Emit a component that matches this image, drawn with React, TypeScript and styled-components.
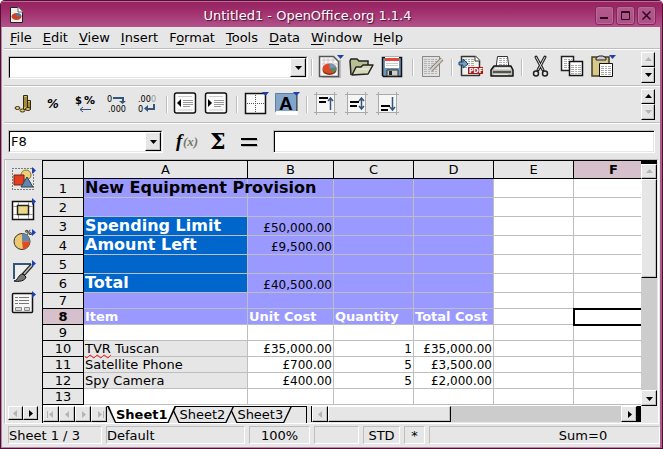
import React from "react";
import styled, { createGlobalStyle, css } from "styled-components";

const face = "#e6e6e6";
const line = "#bebebe";
const purple = "#9999ff";
const blue = "#0066cc";
const pink = "#d6c0cc";

const GlobalStyle = createGlobalStyle`
  * { box-sizing: border-box; }
  body { margin: 0; background: #fff; }
  body, button, input, select, table {
    font-family: "DejaVu Sans", "Bitstream Vera Sans", sans-serif;
    font-size: 13px;
    line-height: 15px;
    color: #000;
  }
  button, input, select { margin: 0; padding: 0; border: 0; border-radius: 0; }
  svg { display: block; flex: none; }
`;

const raised = css`
  background: ${face};
  border: 1px solid;
  border-color: #fff #000 #000 #fff;
  box-shadow: inset -1px -1px 0 ${line};
`;

const Window = styled.div`
  min-height: 100vh;
  display: flex;
  flex-direction: column;
  background: ${face};
  border: solid #4f0f36;
  border-width: 0 1px 1px;
  border-radius: 5px 5px 0 0;
  box-shadow: inset 1px 0 0 #b48aa2, inset -2px 0 0 #a85c86, inset 0 -1px 0 #b48aa2;
  overflow: hidden;
`;

const TitleBar = styled.header`
  height: 27px;
  display: flex;
  align-items: center;
  padding: 2px 6px 0 6px;
  border-top: 1px solid #4f0f36;
  box-shadow: inset 0 1px 0 #c06a9a;
  background: linear-gradient(#96235f, #9f2c6b 35%, #b1538a);
`;

const Title = styled.h1`
  flex: 1;
  margin: 0;
  padding-right: 5px;
  text-align: center;
  font-size: 13px;
  font-weight: normal;
  color: #fff;
  text-shadow: 1px 1px 1px #4f0f36;
  white-space: nowrap;
`;

const WindowButtons = styled.div`
  display: flex;
  gap: 2px;
`;

const WindowButton = styled.button`
  width: 19px;
  height: 19px;
  display: grid;
  place-items: center;
  border: 1px solid #84265c;
  border-radius: 3px;
  background: linear-gradient(#b25a8c, #ae4f86);
  box-shadow: inset 0 0 0 1px #b96a98;
`;

const MenuBar = styled.nav`
  height: 23px;
  display: flex;
  align-items: center;
  gap: 11px;
  margin: 0 2px 0 3px;
  padding: 0 6px 2px;
  border-bottom: 1px solid #fff;
  box-shadow: inset 0 -1px 0 ${line};
`;

const MenuItem = styled.button`
  background: none;
  white-space: nowrap;
  u { text-underline-offset: 2px; }
`;

const ToolBar = styled.div<{ $last?: boolean }>`
  height: ${(p) => (p.$last ? 35 : 37)}px;
  display: flex;
  align-items: center;
  margin: 0 2px 0 3px;
  padding: 0 5px 0 4px;
  ${(p) =>
    !p.$last &&
    css`
      padding-bottom: 2px;
      border-bottom: 1px solid #fff;
      box-shadow: inset 0 -1px 0 ${line};
    `}
`;

const ToolButton = styled.button`
  width: 31px;
  height: 28px;
  background: none;
`;

const Divider = styled.span`
  width: 2px;
  height: 17px;
  margin: 0 3px;
  border-left: 1px solid ${line};
  border-right: 1px solid #fff;
`;

const Spacer = styled.span`
  flex: 1;
`;

const Combo = styled.label<{ $wide?: boolean }>`
  position: relative;
  height: 23px;
  flex: 0 1 ${(p) => (p.$wide ? 300 : 155)}px;
  border: 1px solid;
  border-color: ${line} #fff #fff ${line};
  select {
    display: block;
    width: 100%;
    height: 21px;
    padding: 0 18px 0 1px;
    appearance: none;
    outline: 0;
    background: #fff;
    border: 1px solid;
    border-color: #000 ${face} ${face} #000;
  }
`;

const ComboArrow = styled.span`
  position: absolute;
  top: 1px;
  right: 1px;
  width: 16px;
  height: 19px;
  display: grid;
  place-items: center;
  pointer-events: none;
  ${raised}
`;

const FormulaTools = styled.div`
  display: flex;
  padding: 0 7px 0 10px;
`;

const FormulaInput = styled.input`
  flex: 1;
  min-width: 0;
  height: 23px;
  padding: 0 3px;
  background: #fff;
  border: 1px solid;
  border-color: ${line} #fff #fff ${line};
  box-shadow: inset 1px 1px 0 #000, inset -1px -1px 0 ${face};
  outline: 0;
`;

const Spinner = styled.div`
  width: 14px;
  display: flex;
  flex-direction: column;
`;

const SmallButton = styled.button<{ $w?: number; $h?: number }>`
  flex: none;
  width: ${(p) => p.$w ?? 16}px;
  height: ${(p) => p.$h ?? 16}px;
  display: grid;
  place-items: center;
  ${raised}
`;

const Main = styled.main`
  flex: 1;
  display: flex;
  margin: 0 3px;
  padding-right: 1px;
  border: 1px solid;
  border-color: ${line} #fff #fff ${line};
`;

const SideBar = styled.aside`
  width: 37px;
  flex: none;
  display: flex;
  flex-direction: column;
  padding: 4px 3px 3px 2px;
  border-left: 1px solid #fff;
`;

const SideButton = styled.button`
  width: 31px;
  height: 31px;
  display: flex;
  align-items: flex-start;
  background: none;
`;

const SideScroll = styled.div`
  display: flex;
`;

const Sheet = styled.section`
  flex: 1;
  min-width: 0;
  display: flex;
  flex-direction: column;
`;

const SheetBody = styled.div`
  flex: 1;
  display: flex;
`;

const GridView = styled.div`
  flex: 1;
  min-width: 0;
  overflow: hidden;
  background: #fff;
  border: solid #000;
  border-width: 1px 0 0 1px;
`;

const Grid = styled.table`
  width: 100%;
  min-width: 611px;
  table-layout: fixed;
  border-collapse: separate;
  border-spacing: 0;
`;

const Col = styled.col<{ $w: number }>`
  width: ${(p) => p.$w}px;
`;

const Head = styled.th<{ $h?: number; $on?: boolean }>`
  height: ${(p) => p.$h ?? 18}px;
  padding: 1px 0 0;
  font-weight: ${(p) => (p.$on ? "bold" : "normal")};
  background: ${(p) => (p.$on ? pink : face)};
  border: solid #000;
  border-width: 0 1px 1px 0;
  line-height: 14px;
`;

type Tone = "purple" | "blue" | "grey" | undefined;
const tones = { purple, blue, grey: face };

const Cell = styled.td<{ $tone?: Tone; $big?: boolean; $bold?: boolean; $right?: boolean; $active?: boolean }>`
  padding: 0 1px;
  white-space: nowrap;
  vertical-align: bottom;
  line-height: 15px;
  border: solid ${line};
  border-width: 0 1px 1px 0;
  background: ${(p) => (p.$tone ? tones[p.$tone] : "#fff")};
  ${(p) => p.$right && css`text-align: right; font-size: 12px; line-height: 13px;`}
  ${(p) => p.$bold && css`font-weight: bold; color: #fff;`}
  ${(p) => p.$big && css`font-size: 16px; line-height: 18px; vertical-align: top;`}
  ${(p) => p.$big && p.$tone === "purple" && css`color: #000;`}
  ${(p) => p.$active && css`outline: 2px solid #000; outline-offset: -1px;`}
`;

const Misspelt = styled.span`
  text-decoration: underline wavy #f00 1px;
  text-underline-offset: 1px;
`;

const VScroll = styled.div`
  width: 16px;
  flex: none;
  display: flex;
  flex-direction: column;
  background: #ccc;
`;

const Splitter = styled.span<{ $side?: boolean }>`
  flex: none;
  background: #000;
  ${(p) => (p.$side ? css`width: 4px; height: 16px;` : css`height: 4px;`)}
`;

const VThumb = styled.div`
  height: 99px;
  ${raised}
`;

const Track = styled.div`
  flex: 1;
  display: flex;
  background: #ccc;
`;

const BottomStrip = styled.div`
  height: 17px;
  display: flex;
  border-left: 1px solid #000;
`;

const Tabs = styled.div`
  width: 200px;
  flex: none;
  display: flex;
  border-top: 1px solid #000;
  border-right: 1px solid #000;
`;

const Tab = styled.button<{ $on?: boolean; $z: number }>`
  position: relative;
  z-index: ${(p) => p.$z};
  height: 17px;
  margin-top: -1px;
  padding: 0 9px;
  font-weight: ${(p) => (p.$on ? "bold" : "normal")};
  background: #000;
  clip-path: polygon(0 0, 100% 0, calc(100% - 8px) 100%, 8px 100%);
  & + & { margin-left: -6px; }
  &::before {
    content: "";
    position: absolute;
    z-index: -1;
    inset: ${(p) => (p.$on ? 0 : 1)}px 0 0;
    background: ${(p) => (p.$on ? "#fff" : face)};
    clip-path: polygon(2px 0, calc(100% - 2px) 0, calc(100% - 9px) calc(100% - 1px), 9px calc(100% - 1px));
  }
`;

const HScroll = styled.div`
  flex: 1;
  height: 16px;
  display: flex;
  margin: 0 16px 0 4px;
  border-left: 1px solid #000;
`;

const HThumb = styled.div`
  width: 123px;
  height: 16px;
  ${raised}
`;

const StatusBar = styled.footer`
  height: 24px;
  display: flex;
  gap: 4px;
  margin: 0 2px 0 3px;
  padding: 2px 0 4px 4px;
`;

const Status = styled.div<{ $w?: number; $center?: boolean }>`
  ${(p) => (p.$w ? css`flex: none; width: ${p.$w}px;` : css`flex: 1;`)}
  height: 18px;
  padding: 1px 0;
  white-space: nowrap;
  text-align: ${(p) => (p.$center ? "center" : "left")};
  border: 1px solid;
  border-color: ${line} #fff #fff ${line};
`;

const SumStatus = styled(Status)`
  text-align: center;
  padding-left: 77px;
`;

type Dir = "up" | "down" | "left" | "right";
const arrows: Record<Dir, string> = {
  down: "M1 3h7L4.500 7z",
  up: "M1 6h7L4.500 2z",
  left: "M6 1v7L2 4.500z",
  right: "M3 1v7L7 4.500z",
};

function Arrow({ dir, off, stop }: { dir: Dir; off?: boolean; stop?: boolean }) {
  return (
    <svg width="9" height="9" viewBox="0 0 9 9" fill={off ? "#b4b4b4" : "#000"} aria-hidden="true">
      <path d={arrows[dir]} />
      {stop && <path d={dir === "left" ? "M0 1h1v7H0z" : "M8 1h1v7H8z"} />}
    </svg>
  );
}

function Glyph({ children }: { children: React.ReactNode }) {
  return (
    <svg width="31" height="28" viewBox="0 0 31 28" aria-hidden="true">
      {children}
    </svg>
  );
}

const Flag = () => <path d="M21 2h7l-3.500 4z" fill="#2040a8" />;
const SideFlag = () => <path d="M24 3v7l4-3.500z" fill="#2040a8" />;

function TextLines({ x, y, w, n, c = "#aaa" }: { x: number; y: number; w: number; n: number; c?: string }) {
  return (
    <g stroke={c} strokeDasharray="3 1 2 1">
      {Array.from({ length: n }, (_, i) => (
        <path key={i} d={`M${x} ${y + i * 2 + 0.5}h${w}`} />
      ))}
    </g>
  );
}

function AlignIcon({ bar, arrow }: { bar: number; arrow: string }) {
  return (
    <>
      <path d="M5 4h18v18H5z" fill="#f6f6f6" />
      <path d="M3 4.500h23M3 22.500h23M5.500 2v23M23.500 2v23" stroke="#aaa" />
      <path d={`M8 ${bar}h9M8 ${bar + 4}h7`} stroke="#000" strokeWidth="2" />
      <path d={arrow} fill="none" stroke="#34567a" strokeWidth="1.500" />
    </>
  );
}

const icons: Record<string, React.ReactNode> = {
  "New spreadsheet": (
    <>
      <path d="M6 24h18V7" fill="none" stroke="#bbb" strokeWidth="2" />
      <path d="M3.500 3.500h14l5 5v15h-19z" fill="#f6f6f6" stroke="#555" strokeWidth="1.500" />
      <path d="M6 7h13M6 11h15M8 5v16M12 5v5M17 5v5" stroke="#c8c8c8" />
      <ellipse cx="13.500" cy="17" rx="7" ry="5" fill="#8a3018" />
      <ellipse cx="13.500" cy="15.500" rx="7" ry="5" fill="#dd4a28" />
      <path d="M13.500 15.500v-5c4 0 6 2 7 4z" fill="#7a94b8" />
      <path d="M13.500 15.500l7-1c0 3-1.500 4-3.500 5z" fill="#4f8a68" />
      <Flag />
    </>
  ),
  Open: (
    <>
      <path d="M4 22L3 8l1-2h6l2 2h9v5" fill="#b9bd94" stroke="#222" strokeWidth="1.500" />
      <path d="M5 22l4-8h5l2-2h10l-5 9z" fill="#d7dab8" stroke="#222" strokeWidth="1.500" strokeLinejoin="round" />
      <path d="M10 16h12" stroke="#eef0dc" />
    </>
  ),
  Save: (
    <>
      <path d="M4.500 4.500h19v19h-18l-1-1z" fill="#6f94b8" stroke="#111" strokeWidth="1.500" />
      <path d="M7 4h14v11H7z" fill="#fff" />
      <path d="M7 5h14v3H7z" fill="#e04838" />
      <path d="M8 10.500h12M8 12.500h12" stroke="#ccc" />
      <path d="M9 17h11v6H9z" fill="#ccd0c8" stroke="#333" />
      <path d="M11 18h3v4h-3z" fill="#222" />
    </>
  ),
  "Edit file": (
    <>
      <path d="M5.500 3.500h17v20h-17z" fill="#e0e0e0" stroke="#999" />
      <path d="M5.500 3.500h17v20h-17z" fill="none" stroke="#777" strokeDasharray="1 1" />
      <TextLines x={7} y={6} w={14} n={8} c="#b4b4b4" />
      <path d="M14 17L25 6" stroke="#888" strokeWidth="4" />
      <path d="M14 17L25 6" stroke="#d8d0b8" strokeWidth="2" />
    </>
  ),
  "Export as PDF": (
    <>
      <path d="M5.500 3.500h14l4 4v15h-18z" fill="#f4f4ee" stroke="#333" strokeWidth="1.500" strokeLinejoin="round" />
      <path d="M19 3v5h5" fill="#fff" stroke="#333" />
      <TextLines x={8} y={6} w={10} n={5} />
      <path d="M3 9h4V6l5 5-5 4v-3H3z" fill="#6fa0c8" stroke="#1f3f60" />
      <path d="M12 14h15v7H12z" fill="#a81818" />
      <text x="13" y="20" fontSize="7" fontWeight="bold" fill="#fff" fontFamily="DejaVu Sans Condensed, DejaVu Sans">PDF</text>
    </>
  ),
  Print: (
    <>
      <path d="M9 15L10.500 3.500h10L22 15" fill="#fff" stroke="#333" />
      <TextLines x={12} y={5} w={8} n={4} />
      <path d="M7 13h17l2 4v6H4v-6z" fill="#b4b8b0" stroke="#111" strokeWidth="1.500" strokeLinejoin="round" />
      <path d="M8.500 14.500h14l2 2h-18z" fill="#eee" />
      <path d="M6 19h18" stroke="#555" strokeWidth="2" />
      <path d="M7 21.500h14" stroke="#e4e4dc" />
    </>
  ),
  Cut: (
    <>
      <path d="M10 4l7 13M19 4l-7 13" stroke="#222" strokeWidth="3" strokeLinecap="round" />
      <path d="M10 4l7 13M19 4l-7 13" stroke="#d8d8d8" strokeWidth="1" />
      <g fill="none" stroke="#222" strokeWidth="1.500">
        <circle cx="10" cy="20.500" r="2.500" />
        <circle cx="19" cy="20.500" r="2.500" />
      </g>
    </>
  ),
  Copy: (
    <>
      <path d="M4.500 3.500h12v14h-12z" fill="#fff" stroke="#222" strokeWidth="1.500" />
      <TextLines x={7} y={6} w={8} n={5} />
      <path d="M12.500 8.500h13v14h-13z" fill="#fff" stroke="#111" strokeWidth="1.500" />
      <TextLines x={14} y={12} w={10} n={5} />
    </>
  ),
  Paste: (
    <>
      <path d="M4 4h17v19H4z" fill="#d8c88c" stroke="#443c1c" strokeWidth="1.500" />
      <path d="M8 7V5l3-2h4l3 2v2z" fill="#ccc" stroke="#222" />
      <path d="M11.500 10.500h13v13h-13z" fill="#fff" stroke="#111" />
      <TextLines x={13} y={13} w={10} n={5} />
      <Flag />
    </>
  ),
  Currency: (
    <>
      <path d="M15.500 5.500h4v14h-4zM19.500 10.500h3v9h-3z" fill="#d8bc60" stroke="#33290c" />
      <path d="M16 8h3M16 10h3M16 12h3M16 14h3M16 16h3M20 13h2M20 15h2M20 17h2" stroke="#6c5618" />
      <g fill="#e4cc78" stroke="#33290c">
        <ellipse cx="9.500" cy="18" rx="2.500" ry="1.500" />
        <ellipse cx="14.500" cy="20.500" rx="2.500" ry="1.500" />
        <ellipse cx="20" cy="19" rx="2.500" ry="1.500" />
      </g>
    </>
  ),
  Percent: <text x="8" y="18" fontSize="13" fontWeight="bold" fontStyle="italic" fontFamily="DejaVu Sans Condensed, DejaVu Sans">%</text>,
  "Standard format": (
    <>
      <text x="5" y="14" fontSize="10" fontWeight="bold" fontFamily="DejaVu Sans">$</text>
      <text x="14" y="14" fontSize="11" fontWeight="bold" fontFamily="DejaVu Sans">%</text>
      <path d="M21 19.500H10M13 17l-3 2.500L13 22" fill="none" stroke="#34567a" />
    </>
  ),
  "Add decimal": (
    <>
      <text x="6" y="12" fontSize="9" fontFamily="DejaVu Sans Condensed">0</text>
      <path d="M12 8h10v4" fill="none" stroke="#34567a" strokeWidth="2" />
      <path d="M18 11h7l-3.500 3z" fill="#34567a" />
      <text x="7" y="22" fontSize="9" fontFamily="DejaVu Sans Condensed">.000</text>
    </>
  ),
  "Remove decimal": (
    <>
      <text x="6" y="12" fontSize="9" fontFamily="DejaVu Sans Condensed">.00<tspan fill="#999">0</tspan></text>
      <text x="6" y="22" fontSize="9" fontFamily="DejaVu Sans Condensed">0</text>
      <path d="M22 14v5h-7" fill="none" stroke="#34567a" strokeWidth="2" />
      <path d="M16 15v7l-4-3.500z" fill="#34567a" />
    </>
  ),
  "Decrease indent": (
    <>
      <rect x="3.500" y="3" width="21" height="20" rx="2" fill="#fafafa" stroke="#111" strokeWidth="1.500" />
      <path d="M10 9v8l-4-4z" />
      <path d="M12 10.500h10M12 12.500h10M12 14.500h10M12 16.500h7" stroke="#999" />
      <path d="M7 6.500h14M7 20h14" stroke="#ccc" />
    </>
  ),
  "Increase indent": (
    <>
      <rect x="3.500" y="3" width="21" height="20" rx="2" fill="#fafafa" stroke="#111" strokeWidth="1.500" />
      <path d="M6 9v8l4-4z" />
      <path d="M12 10.500h10M12 12.500h10M12 14.500h10M12 16.500h7" stroke="#999" />
      <path d="M7 6.500h14M7 20h14" stroke="#ccc" />
    </>
  ),
  Borders: (
    <>
      <path d="M4.500 3.500h20v20h-20z" fill="#fafafa" stroke="#111" strokeWidth="1.500" />
      <path d="M14.500 5v18M6 13.500h18" stroke="#555" strokeDasharray="1 1" />
      <Flag />
    </>
  ),
  "Background colour": (
    <>
      <path d="M3.500 3.500h21v18h-21z" fill="#83a5cc" stroke="#5f7f9f" />
      <path d="M25 5v17" stroke="#333" />
      <path d="M4 21h22v4H4z" fill="#fff" />
      <text x="7" y="20" fontSize="19" fontWeight="bold" fontFamily="Liberation Sans">A</text>
      <Flag />
    </>
  ),
  "Align top": <AlignIcon bar={8} arrow="M19.500 20V8M17 11l2.500-3L22 11" />,
  "Align centre": <AlignIcon bar={12} arrow="M19.500 19V8M17 11l2.500-3L22 11M17 16l2.500 3L22 16" />,
  "Align bottom": <AlignIcon bar={16} arrow="M19.500 7v13M17 17l2.500 3L22 17" />,
  "Function wizard": (
    <>
      <text x="3" y="19" fontSize="19" fontWeight="bold" fontStyle="italic" fontFamily="Liberation Serif">f</text>
      <text x="10" y="18" fontSize="13" fontWeight="bold" fontStyle="italic" fill="#77776c" fontFamily="Liberation Serif">(x)</text>
    </>
  ),
  Sum: <text x="6" y="21" fontSize="22" fontWeight="bold" fontFamily="DejaVu Serif">Σ</text>,
  Function: (
    <>
      <path d="M7 12h16M7 18h16" stroke="#bbb" strokeWidth="2" />
      <path d="M6 11h16M6 17h16" stroke="#000" strokeWidth="2" />
    </>
  ),
  "Insert object": (
    <>
      <path d="M4.500 4.500h21v21h-21z" fill="none" stroke="#111" strokeDasharray="1 2" />
      <circle cx="18" cy="11" r="5" fill="#ecd078" stroke="#8a7434" />
      <path d="M6 11h10v10H6z" fill="#e04020" stroke="#7c1c0c" />
      <path d="M19 13l6 10H13z" fill="#6485ac" stroke="#27425f" />
      <SideFlag />
    </>
  ),
  "Insert cells": (
    <>
      <path d="M4.500 6.500h21v18h-21z" fill="#fff" stroke="#111" strokeWidth="1.500" />
      <path d="M10.500 7v17M20.500 7v17M5 11.500h20M5 19.500h20" stroke="#999" />
      <path d="M9.500 10.500h11v9h-11z" fill="#ecd888" stroke="#222" strokeWidth="1.500" />
      <SideFlag />
    </>
  ),
  "Insert chart": (
    <>
      <circle cx="14" cy="15.500" r="8" fill="#ecc870" stroke="#333" />
      <path d="M14 15.500v-8a8 8 0 0 1 8 8z" fill="#6485ac" />
      <path d="M14 15.500h8a8 8 0 0 1-7 8z" fill="#e04a20" />
      <text x="17" y="9" fontSize="7" fontWeight="bold" fontFamily="DejaVu Sans">%</text>
      <SideFlag />
    </>
  ),
  "Draw functions": (
    <>
      <path d="M6 7h18L8 22H6z" fill="#eee" />
      <path d="M5 7h18M6 7v15" stroke="#34567a" strokeWidth="2" fill="none" />
      <path d="M24 8L15 18" stroke="#222" strokeWidth="4" />
      <path d="M24 8L16 17" stroke="#bbb" strokeWidth="1.500" />
      <path d="M6 24c4 0 4-7 9-7l3 3c-1 4-7 5-12 4z" fill="#777" stroke="#111" />
      <SideFlag />
    </>
  ),
  Form: (
    <>
      <rect x="4.500" y="5.500" width="20" height="19" rx="1" fill="#f6f6f6" stroke="#111" strokeWidth="1.500" />
      <path d="M7 9.500h3M7 12.500h3M7 15.500h3M11 9.500h10M11 12.500h10M11 15.500h10" stroke="#777" />
      <path d="M7.500 19.500h6v3h-6zM16.500 19.500h5v3h-5z" fill="#ddd" stroke="#888" />
      <SideFlag />
    </>
  ),
};

function Tools({ names }: { names: string[] }) {
  return (
    <>
      {names.map((name, i) =>
        name === "|" ? (
          <Divider key={i} />
        ) : (
          <ToolButton key={i} aria-label={name}>
            <Glyph>{icons[name]}</Glyph>
          </ToolButton>
        )
      )}
    </>
  );
}

function ScrollPair({ label, upOff, downOff }: { label: string; upOff?: boolean; downOff?: boolean }) {
  return (
    <Spinner>
      <SmallButton $w={14} $h={15} aria-label={`Previous ${label}`}>
        <Arrow dir="up" off={upOff} />
      </SmallButton>
      <SmallButton $w={14} $h={16} aria-label={`Next ${label}`}>
        <Arrow dir="down" off={downOff} />
      </SmallButton>
    </Spinner>
  );
}

const menus: [string, string, string][] = [
  ["", "F", "ile"],
  ["", "E", "dit"],
  ["", "V", "iew"],
  ["", "I", "nsert"],
  ["F", "o", "rmat"],
  ["", "T", "ools"],
  ["", "D", "ata"],
  ["", "W", "indow"],
  ["", "H", "elp"],
];

const columns = ["A", "B", "C", "D", "E", "F"];
const columnWidths = [41, 164, 86, 80, 80, 80, 80];

type Row = { h: number; text?: React.ReactNode[]; tone?: Tone[]; big?: boolean; heading?: boolean };
const P: Tone = "purple";
const rows: Row[] = [
  { h: 19, text: ["New Equipment Provision"], tone: [P, P, P, P], big: true },
  { h: 19, tone: [P, P, P, P] },
  { h: 19, text: ["Spending Limit", "£50,000.00"], tone: ["blue", P, P, P], big: true },
  { h: 19, text: ["Amount Left", "£9,500.00"], tone: ["blue", P, P, P], big: true },
  { h: 19, tone: ["blue", P, P, P] },
  { h: 19, text: ["Total", "£40,500.00"], tone: ["blue", P, P, P], big: true },
  { h: 16, tone: [P, P, P, P] },
  { h: 16, text: ["Item", "Unit Cost", "Quantity", "Total Cost"], tone: [P, P, P, P], heading: true },
  { h: 16 },
  { h: 16, text: [<><Misspelt>TVR</Misspelt> Tuscan</>, "£35,000.00", "1", "£35,000.00"], tone: ["grey"] },
  { h: 16, text: ["Satellite Phone", "£700.00", "5", "£3,500.00"], tone: ["grey"] },
  { h: 16, text: ["Spy Camera", "£400.00", "5", "£2,000.00"], tone: ["grey"] },
  { h: 16 },
];

export default function App() {
  return (
    <Window>
      <GlobalStyle />
      <TitleBar>
        <svg width="18" height="18" viewBox="0 0 18 18" aria-hidden="true">
          <path d="M3.500 1.500h8l4 4v11h-12z" fill="#eee" stroke="#222" />
          <path d="M11 1v5h5" fill="#fff" stroke="#666" />
          <ellipse cx="9.500" cy="10.500" rx="5" ry="3.500" fill="#c8452a" />
          <path d="M9.500 10.500V7q4 0 5 3z" fill="#5578a0" />
        </svg>
        <Title>Untitled1 - OpenOffice.org 1.1.4</Title>
        <WindowButtons>
          <WindowButton aria-label="Minimize">
            <svg width="9" height="9" stroke="#2c0a1e" strokeWidth="2"><path d="M0 7h8" /></svg>
          </WindowButton>
          <WindowButton aria-label="Maximize">
            <svg width="9" height="9" fill="none" stroke="#2c0a1e"><path d="M.5 .5h8v8h-8zM.5 1.500h8" /></svg>
          </WindowButton>
          <WindowButton aria-label="Close">
            <svg width="9" height="9" stroke="#2c0a1e" strokeWidth="1.500"><path d="M.5 .5l8 8M8.500 .5l-8 8" /></svg>
          </WindowButton>
        </WindowButtons>
      </TitleBar>

      <MenuBar>
        {menus.map(([before, key, after]) => (
          <MenuItem key={before + key + after}>{before}<u>{key}</u>{after}</MenuItem>
        ))}
      </MenuBar>

      <ToolBar>
        <Combo $wide>
          <select aria-label="Load URL"><option></option></select>
          <ComboArrow><Arrow dir="down" /></ComboArrow>
        </Combo>
        <Tools names={["|", "New spreadsheet", "Open", "Save", "|", "Edit file", "|", "Export as PDF", "Print", "|", "Cut", "Copy", "Paste"]} />
        <Spacer />
        <ScrollPair label="function tools" upOff />
      </ToolBar>

      <ToolBar>
        <Tools names={["Currency", "Percent", "Standard format", "Add decimal", "Remove decimal", "|", "Decrease indent", "Increase indent", "|", "Borders", "Background colour", "|", "Align top", "Align centre", "Align bottom"]} />
        <Spacer />
        <ScrollPair label="object tools" downOff />
      </ToolBar>

      <ToolBar $last>
        <Combo>
          <select aria-label="Cell reference"><option>F8</option></select>
          <ComboArrow><Arrow dir="down" /></ComboArrow>
        </Combo>
        <FormulaTools>
          <Tools names={["Function wizard", "Sum", "Function"]} />
        </FormulaTools>
        <FormulaInput aria-label="Input line" />
      </ToolBar>

      <Main>
        <SideBar>
          {["Insert object", "Insert cells", "Insert chart", "Draw functions", "Form"].map((name) => (
            <SideButton key={name} aria-label={name}>
              <Glyph>{icons[name]}</Glyph>
            </SideButton>
          ))}
          <Spacer />
          <SideScroll>
            <SmallButton $w={15} $h={14} aria-label="Previous tools"><Arrow dir="left" off /></SmallButton>
            <SmallButton $w={15} $h={14} aria-label="More tools"><Arrow dir="right" /></SmallButton>
          </SideScroll>
        </SideBar>

        <Sheet>
          <SheetBody>
            <GridView>
              <Grid>
                <colgroup>
                  {columnWidths.map((w, i) => <Col key={i} $w={w} />)}
                </colgroup>
                <thead>
                  <tr>
                    <Head />
                    {columns.map((c) => <Head key={c} scope="col" $on={c === "F"}>{c}</Head>)}
                  </tr>
                </thead>
                <tbody>
                  {rows.map((row, r) => (
                    <tr key={r}>
                      <Head scope="row" $h={row.h} $on={r === 7}>{r + 1}</Head>
                      {columns.map((c, i) => (
                        <Cell
                          key={c}
                          $tone={row.tone?.[i]}
                          $big={row.big && i === 0}
                          $bold={row.heading || (row.big && i === 0)}
                          $right={i > 0 && !row.heading}
                          $active={r === 7 && c === "F"}
                        >
                          {row.text?.[i]}
                        </Cell>
                      ))}
                    </tr>
                  ))}
                </tbody>
              </Grid>
            </GridView>
            <VScroll>
              <Splitter />
              <SmallButton $h={15} aria-label="Scroll up"><Arrow dir="up" off /></SmallButton>
              <VThumb />
              <Spacer />
              <SmallButton aria-label="Scroll down"><Arrow dir="down" /></SmallButton>
            </VScroll>
          </SheetBody>
          <BottomStrip>
            <SmallButton aria-label="First sheet"><Arrow dir="left" off stop /></SmallButton>
            <SmallButton aria-label="Previous sheet"><Arrow dir="left" off /></SmallButton>
            <SmallButton aria-label="Next sheet"><Arrow dir="right" off /></SmallButton>
            <SmallButton aria-label="Last sheet"><Arrow dir="right" off stop /></SmallButton>
            <Tabs>
              <Tab $on $z={3}>Sheet1</Tab>
              <Tab $z={2}>Sheet2</Tab>
              <Tab $z={1}>Sheet3</Tab>
            </Tabs>
            <HScroll>
              <SmallButton aria-label="Scroll left"><Arrow dir="left" off /></SmallButton>
              <Track><HThumb /></Track>
              <SmallButton aria-label="Scroll right"><Arrow dir="right" /></SmallButton>
              <Splitter $side />
            </HScroll>
          </BottomStrip>
        </Sheet>
      </Main>

      <StatusBar>
        <Status $w={94}>Sheet 1 / 3</Status>
        <Status $w={139}>Default</Status>
        <Status $w={61} $center>100%</Status>
        <Status $w={45} />
        <Status $w={37} $center>STD</Status>
        <Status $w={21} $center>*</Status>
        <SumStatus>Sum=0</SumStatus>
      </StatusBar>
    </Window>
  );
}
